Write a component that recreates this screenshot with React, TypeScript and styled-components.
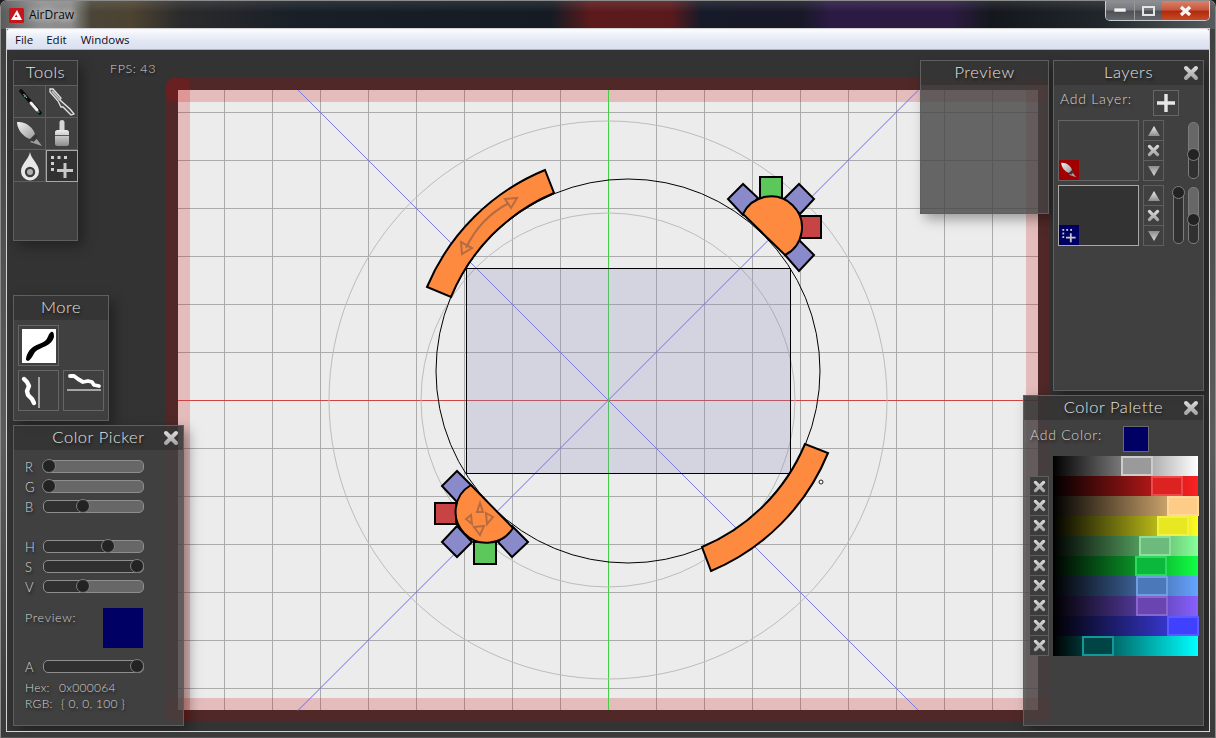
import React from "react";
import styled, { createGlobalStyle } from "styled-components";

const GlobalStyle = createGlobalStyle`
  html, body {
    margin: 0;
    padding: 0;
    background: #1c1c1c;
    overflow: hidden;
  }
  #root {
    width: 1216px;
    height: 738px;
  }
`;

const uiFont = `"Lato", "Open Sans", sans-serif`;

/* ---------- window chrome ---------- */

const Shell = styled.div`
  position: relative;
  width: 1216px;
  height: 738px;
  box-sizing: border-box;
  display: flex;
  flex-direction: column;
  padding: 0 6px 6px 6px;
  border-radius: 7px 7px 0 0;
  border: 1px solid #8c8c8c;
  border-bottom-color: #555;
  margin: 0;
  background: linear-gradient(180deg, #3d3d3d 0%, #4f4f4f 30%, #5c5c5c 60%, #3a3a3a 100%);
`;

const TitleBar = styled.div`
  height: 28px;
  margin: 0 -6px;
  padding: 0 5px 0 8px;
  display: flex;
  align-items: flex-start;
  border-radius: 6px 6px 0 0;
  background:
    linear-gradient(180deg, rgba(255, 255, 255, 0.1), rgba(255, 255, 255, 0) 40%),
    linear-gradient(
      90deg,
      #5a5a5a 0,
      #8f8f8f 40px,
      #8a8a8a 70px,
      #4a4538 90px,
      #4d4330 130px,
      #2b2b2c 180px,
      #181f28 300px,
      #151b24 550px,
      #5c1a1c 590px,
      #5a1a1c 670px,
      #171a28 700px,
      #181828 800px,
      #2c1a44 830px,
      #2d1a42 950px,
      #14181e 990px,
      #20262b 1100px,
      #585c60 1216px
    );
`;

const AppIcon = styled.svg`
  width: 15px;
  height: 15px;
  margin-top: 7px;
  flex: none;
`;

const AppTitle = styled.span`
  margin: 6px 0 0 5px;
  font: 12px/16px "Open Sans", sans-serif;
  color: #0c0c0c;
  text-shadow: 0 0 6px rgba(255, 255, 255, 0.8), 0 0 10px rgba(255, 255, 255, 0.6);
`;

const WindowControls = styled.div`
  display: flex;
  margin-left: auto;
  height: 20px;
  box-sizing: border-box;
  border: 1px solid #c9cdd0;
  border-top: none;
  border-radius: 0 0 5px 5px;
  overflow: hidden;
`;

const ControlButton = styled.div<{ $close?: boolean; $width: number }>`
  width: ${(p) => p.$width}px;
  display: flex;
  align-items: center;
  justify-content: center;
  border-left: ${(p) => (p.$close ? "none" : "1px solid #9a9a9a")};
  background: ${(p) =>
    p.$close
      ? "linear-gradient(180deg, #d8826c 0%, #c9583c 45%, #b02c10 55%, #c84a24 100%)"
      : "linear-gradient(180deg, #8c9094 0%, #74787c 45%, #4e5256 55%, #65696d 100%)"};
  &:first-child {
    border-left: none;
  }
`;

const MenuBar = styled.div`
  height: 21px;
  box-sizing: border-box;
  display: flex;
  align-items: center;
  padding: 1px 0 0 8px;
  border-radius: 2px 2px 0 0;
  border-top: 1px solid #f4f6fb;
  border-bottom: 1px solid #a9b0c6;
  background: linear-gradient(180deg, #fbfcfe 0%, #f1f3fa 20%, #e4e8f4 55%, #dae0f0 100%);
`;

const MenuItem = styled.span<{ $gap: number }>`
  margin-right: ${(p) => p.$gap}px;
  font: 11.5px/16px "Open Sans", sans-serif;
  color: #0c0c24;
`;

const Client = styled.div`
  flex: 1;
  display: flex;
  flex-direction: column;
  outline: 1px solid #d4d4d4;
`;

const Workspace = styled.div`
  position: relative;
  flex: 1;
  overflow: hidden;
  background: #333333;
`;

const CanvasSvg = styled.svg`
  display: block;
  width: 1202px;
  height: 681px;
`;

const FpsLabel = styled.span`
  position: absolute;
  left: 103px;
  top: 11px;
  font: 300 12.5px/16px ${uiFont};
  letter-spacing: 0.6px;
  color: #d4d4d4;
  text-shadow: 1px 2px 3px rgba(0, 0, 0, 0.7);
`;

/* ---------- floating panels ---------- */

const Panel = styled.section<{ $x: number; $y: number; $w: number; $h: number; $glass?: boolean }>`
  position: absolute;
  left: ${(p) => p.$x}px;
  top: ${(p) => p.$y}px;
  width: ${(p) => p.$w}px;
  height: ${(p) => p.$h}px;
  box-sizing: border-box;
  display: flex;
  flex-direction: column;
  border: 1px solid #5f5f5f;
  background: ${(p) => (p.$glass ? "rgba(68, 68, 68, 0.8)" : "#404040")};
  box-shadow: 5px 5px 12px rgba(0, 0, 0, 0.35);
  font-family: ${uiFont};
  color: #d4d4d4;
`;

const PanelHeader = styled.header`
  position: relative;
  flex: none;
  height: 24px;
  box-sizing: border-box;
  padding-bottom: 3px;
  display: flex;
  align-items: center;
  justify-content: center;
  background: rgba(40, 40, 40, 0.45);
  font-size: 16.5px;
  font-weight: 300;
  letter-spacing: 0.55px;
  color: #e2e2e2;
  text-shadow: 1px 2px 3px rgba(0, 0, 0, 0.8);
`;

const PanelClose = styled.div`
  position: absolute;
  right: 4px;
  top: 4px;
  width: 16px;
  height: 16px;
`;

const ToolGrid = styled.div`
  display: grid;
  grid-template-columns: 32px 32px;
  grid-auto-rows: 32px;
  border-top: 1px solid #5f5f5f;
`;

const ToolCell = styled.div<{ $active?: boolean }>`
  box-sizing: border-box;
  display: flex;
  align-items: center;
  justify-content: center;
  border-right: 1px solid #5f5f5f;
  border-bottom: 1px solid #5f5f5f;
  background: ${(p) => (p.$active ? "#323232" : "transparent")};
  outline: ${(p) => (p.$active ? "1px solid #a8a8a8" : "none")};
  outline-offset: -1px;
  &:nth-child(2n) {
    border-right: none;
  }
`;

const StrokeGrid = styled.div`
  display: grid;
  grid-template-columns: 41px 41px;
  grid-auto-rows: 41px;
  column-gap: 4px;
  row-gap: 4px;
  padding: 5px 0 0 4px;
`;

const StrokeButton = styled.div`
  box-sizing: border-box;
  border: 1px solid #666;
  display: flex;
  align-items: center;
  justify-content: center;
`;

const StrokeSpacer = styled.div``;

/* ---------- color picker ---------- */

const PickerBody = styled.div`
  padding: 6px 0 0 11px;
  font-size: 12px;
  text-shadow: 1px 2px 3px rgba(0, 0, 0, 0.7);
`;

const SliderGroup = styled.div`
  margin-bottom: 20px;
`;

const SliderRow = styled.div`
  display: flex;
  align-items: center;
  height: 20px;
`;

const SliderLabel = styled.span`
  width: 18px;
  padding-top: 1px;
  font-size: 13px;
  font-weight: 300;
`;

const SliderTrack = styled.div<{ $value: number }>`
  position: relative;
  width: 101px;
  height: 13px;
  box-sizing: border-box;
  border: 1px solid #8e8e8e;
  border-radius: 5px;
  background: linear-gradient(
    90deg,
    #303030 ${(p) => p.$value}%,
    #676767 ${(p) => p.$value}%
  );
`;

const SliderThumb = styled.div<{ $value: number }>`
  position: absolute;
  top: 50%;
  left: ${(p) => 5 + p.$value * 0.88}px;
  width: 14px;
  height: 14px;
  box-sizing: border-box;
  margin: -7px 0 0 -7px;
  border-radius: 50%;
  border: 1px solid #7e7e7e;
  background: #232323;
`;

const PreviewRow = styled.div`
  display: flex;
  justify-content: space-between;
  width: 118px;
  height: 40px;
  margin: -8px 0 8px;
`;

const PreviewLabel = styled.span`
  margin-top: 2px;
  font-size: 12.5px;
  font-weight: 300;
  letter-spacing: 0.7px;
`;

const Swatch = styled.div<{ $size: number; $outlined?: boolean }>`
  width: ${(p) => p.$size}px;
  height: ${(p) => p.$size}px;
  box-sizing: border-box;
  background: #000064;
  border: ${(p) => (p.$outlined ? "1px solid #6a6a6a" : "none")};
`;

const InfoLine = styled.div<{ $top?: number }>`
  display: flex;
  height: 16px;
  line-height: 16px;
  margin-top: ${(p) => p.$top ?? 0}px;
  font-size: 12px;
  font-weight: 300;
  letter-spacing: 0.3px;
  color: #d0d0d0;
`;

const InfoKey = styled.span<{ $width: number }>`
  width: ${(p) => p.$width}px;
`;

/* ---------- layers ---------- */

const LayersBody = styled.div`
  padding: 5px 0 0 4px;
`;

const AddRow = styled.div<{ $pad: number; $width: number }>`
  display: flex;
  align-items: flex-start;
  justify-content: space-between;
  box-sizing: border-box;
  width: ${(p) => p.$width}px;
  padding-left: ${(p) => p.$pad}px;
  margin-bottom: 4px;
`;

const AddLabel = styled.span`
  font-size: 14px;
  font-weight: 300;
  line-height: 18px;
  letter-spacing: 0.75px;
  color: #d4d4d4;
  text-shadow: 1px 2px 3px rgba(0, 0, 0, 0.7);
`;

const AddButton = styled.div`
  width: 26px;
  height: 26px;
  box-sizing: border-box;
  border: 1px solid #666;
  display: flex;
  align-items: center;
  justify-content: center;
`;

const LayerRow = styled.div`
  display: flex;
  height: 61px;
  margin-bottom: 4px;
`;

const LayerThumb = styled.div<{ $active?: boolean }>`
  position: relative;
  width: 81px;
  height: 61px;
  box-sizing: border-box;
  border: 1px solid ${(p) => (p.$active ? "#a8a8a8" : "#666")};
  background: ${(p) => (p.$active ? "#333333" : "transparent")};
`;

const LayerBadge = styled.div<{ $color: string }>`
  position: absolute;
  left: 0;
  bottom: 0;
  width: 20px;
  height: 20px;
  display: flex;
  align-items: center;
  justify-content: center;
  background: ${(p) => p.$color};
`;

const LayerActions = styled.div`
  display: flex;
  flex-direction: column;
  margin-left: 4px;
  width: 21px;
  border: 1px solid #5f5f5f;
  box-sizing: border-box;
  height: 61px;
`;

const LayerAction = styled.div`
  flex: 1;
  display: flex;
  align-items: center;
  justify-content: center;
  & + & {
    border-top: 1px solid #5f5f5f;
  }
`;

const VSliderSlot = styled.div<{ $left: number }>`
  width: 11px;
  margin-left: ${(p) => p.$left}px;
`;

const VSlider = styled.div<{ $value: number; $fill?: boolean }>`
  position: relative;
  width: 11px;
  height: 57px;
  margin-top: 2px;
  box-sizing: border-box;
  border: 1px solid #7c7c7c;
  border-radius: 5px;
  background: ${(p) =>
    p.$fill
      ? `linear-gradient(180deg, #676767 ${p.$value}%, #303030 ${p.$value}%)`
      : "#303030"};
`;

const VThumb = styled.div<{ $value: number }>`
  position: absolute;
  left: 50%;
  top: ${(p) => 4 + p.$value * 0.47}px;
  width: 13px;
  height: 13px;
  box-sizing: border-box;
  margin: -6.5px 0 0 -6.5px;
  border-radius: 50%;
  border: 1px solid #7e7e7e;
  background: #232323;
`;

/* ---------- palette ---------- */

const PaletteBody = styled.div`
  padding: 6px 0 0 5px;
`;

const PaletteColumns = styled.div`
  display: flex;
  margin-top: 2px;
  gap: 4px;
`;

const DeleteColumn = styled.div`
  margin-top: 20px;
  display: flex;
  flex-direction: column;
  width: 20px;
`;

const DeleteButton = styled.div`
  height: 20px;
  box-sizing: border-box;
  display: flex;
  align-items: center;
  justify-content: center;
  border: 1px solid #5f5f5f;
  background: #3c3c3c;
  & + & {
    border-top: none;
  }
`;

const RampColumn = styled.div`
  width: 145px;
  display: flex;
  flex-direction: column;
`;

const Ramp = styled.div<{ $end: string }>`
  position: relative;
  height: 20px;
  background: linear-gradient(90deg, #000 0%, ${(p) => p.$end} 100%);
`;

const RampMark = styled.div<{ $left: number; $fill: string; $edge: string }>`
  position: absolute;
  top: 0;
  bottom: 0;
  left: ${(p) => p.$left}px;
  width: 32px;
  box-sizing: border-box;
  background: ${(p) => p.$fill};
  border: 2px solid ${(p) => p.$edge};
`;

/* ---------- icons ---------- */

function IconDefs() {
  return (
    <svg width="0" height="0" style={{ position: "absolute" }}>
      <defs>
        <linearGradient id="metal" x1="0" y1="0" x2="0" y2="1">
          <stop offset="0" stopColor="#eeeeee" />
          <stop offset="1" stopColor="#8c8c8c" />
        </linearGradient>
        <linearGradient id="metalDown" x1="0" y1="0" x2="0" y2="1">
          <stop offset="0" stopColor="#8c8c8c" />
          <stop offset="1" stopColor="#d8d8d8" />
        </linearGradient>
        <linearGradient id="leaf" x1="0" y1="0" x2="1" y2="1">
          <stop offset="0" stopColor="#f2f2f2" />
          <stop offset="1" stopColor="#9a9a9a" />
        </linearGradient>
        <linearGradient id="cross" gradientUnits="userSpaceOnUse" x1="0" y1="1" x2="0" y2="15">
          <stop offset="0" stopColor="#dedede" />
          <stop offset="1" stopColor="#a0a0a0" />
        </linearGradient>
      </defs>
    </svg>
  );
}

function CrossIcon({ size }: { size: number }) {
  return (
    <svg width={size} height={size} viewBox="0 0 16 16">
      <path d="M3 3 L13 13 M13 3 L3 13" stroke="url(#cross)" strokeWidth="4" strokeLinecap="round" />
    </svg>
  );
}

function TriangleIcon({ down }: { down?: boolean }) {
  return (
    <svg width="14" height="12" viewBox="0 0 14 12">
      {down ? (
        <path d="M1 1 H13 L7 11 Z" fill="url(#metalDown)" />
      ) : (
        <path d="M7 1 L13 11 H1 Z" fill="url(#metal)" />
      )}
    </svg>
  );
}

function PenIcon() {
  return (
    <svg width="30" height="30" viewBox="0 0 30 30">
      <path d="M6 4 L25 26" stroke="#0c0c0c" strokeWidth="3.6" strokeLinecap="round" />
      <path d="M16 16 L22 23" stroke="#f0f0f0" strokeWidth="3" strokeLinecap="round" />
      <path d="M8.5 7 L12 11" stroke="#c8c8c8" strokeWidth="1" />
      <circle cx="10" cy="9" r="1.2" fill="#3aa36a" />
      <circle cx="23.5" cy="25" r="1.1" fill="#3aa36a" />
    </svg>
  );
}

function PenOutlineIcon() {
  return (
    <svg width="30" height="30" viewBox="0 0 30 30">
      <path
        d="M3 2 L6 2 L14 11 L13 13 L23 22 L27 27 L24 28 L16 20 L14 20 L11 14 L3 5 Z"
        fill="#4a4a4a"
        stroke="#e4e4e4"
        strokeWidth="1.3"
      />
      <path d="M5 4 L13 13" stroke="#bcbcbc" strokeWidth="2" />
    </svg>
  );
}

function BrushIcon({ size }: { size: number }) {
  return (
    <svg width={size} height={size} viewBox="0 0 30 30">
      <path d="M2 3 C10 2 18 8 20 15 L15 20 C8 18 2 10 2 3 Z" fill="url(#leaf)" />
      <path d="M21 19 L27 27 L15 23 Z" fill="#a0a0a0" />
      <path d="M15.5 20.5 L20.5 15.5 L23 18.5 L18.5 23 Z" fill="#383838" />
    </svg>
  );
}

function FlatBrushIcon() {
  return (
    <svg width="30" height="30" viewBox="0 0 30 30">
      <path d="M12.5 3.5 a2.5 2.5 0 0 1 5 0 V11 h-5 Z" fill="#d6d6d6" />
      <rect x="8" y="11" width="14" height="16" rx="2.5" fill="url(#metal)" />
      <rect x="8" y="16" width="14" height="1" fill="#5a5a5a" />
    </svg>
  );
}

function DropIcon() {
  return (
    <svg width="30" height="30" viewBox="0 0 30 30">
      <path d="M15 1 C16 8 24 13 24 20.5 A9 9 0 0 1 6 20.5 C6 13 14 8 15 1 Z" fill="#e8e8e8" />
      <circle cx="15" cy="21" r="5.2" fill="#3c3c3c" />
      <circle cx="15" cy="21" r="3" fill="#b0b0b0" />
    </svg>
  );
}

function MarqueeIcon({ size }: { size: number }) {
  return (
    <svg width={size} height={size} viewBox="0 0 30 30">
      <g fill="#d0d0d0">
        <rect x="4" y="5" width="3" height="3" />
        <rect x="10.5" y="5" width="3" height="3" />
        <rect x="17" y="5" width="3" height="3" />
        <rect x="4" y="11" width="3" height="3" />
        <rect x="4" y="17" width="3" height="3" />
      </g>
      <path d="M18 12 V27 M10 19.5 H26" stroke="#c8c8c8" strokeWidth="3" />
    </svg>
  );
}

function PlusIcon() {
  return (
    <svg width="22" height="22" viewBox="0 0 22 22">
      <path d="M11 2 V20 M2 11 H20" stroke="#e6e6e6" strokeWidth="3.4" />
    </svg>
  );
}

function AirLogo() {
  return (
    <AppIcon viewBox="0 0 15 15">
      <rect width="15" height="15" rx="1.5" fill="#c4161c" />
      <path d="M8 2 L13 12 H2.5 L5 9 H8.5 L7.3 6.5 L4 12 H2 Z" fill="#ffffff" />
    </AppIcon>
  );
}

/* ---------- the drawing on the canvas ---------- */

const gridColumns = [224, 272, 320, 368, 416, 464, 512, 560, 656, 704, 752, 800, 848, 896, 944, 992];
const gridRows = [112, 160, 208, 256, 304, 352, 448, 496, 544, 592, 640, 688];

const ORANGE = "#fe8a40";
const GREEN = "#5cc85c";
const RED = "#c84444";
const PERIWINKLE = "#8a8acb";
const ARROW = "#b56c40";

function Diamonds({ points }: { points: string[] }) {
  return (
    <>
      {points.map((p) => (
        <polygon key={p} points={p} fill={PERIWINKLE} stroke="#000" strokeWidth="2" />
      ))}
    </>
  );
}

function CanvasDrawing() {
  return (
    <CanvasSvg viewBox="7 50 1202 681">
      <rect x="178" y="90" width="860" height="620" fill="#ececec" />
      {gridColumns.map((x) => (
        <line key={x} x1={x + 0.5} y1="90" x2={x + 0.5} y2="710" stroke="#ababab" />
      ))}
      {gridRows.map((y) => (
        <line key={y} x1="178" y1={y + 0.5} x2="1038" y2={y + 0.5} stroke="#ababab" />
      ))}

      <g fill="rgba(200,0,0,0.2)">
        <rect x="166" y="78" width="884" height="24" rx="8" />
        <rect x="166" y="698" width="884" height="24" rx="8" />
        <rect x="166" y="78" width="24" height="644" rx="8" />
        <rect x="1026" y="78" width="24" height="644" rx="8" />
      </g>

      <g fill="none" strokeWidth="1">
        <line x1="298" y1="90" x2="918" y2="710" stroke="#7a7ae0" />
        <line x1="298" y1="710.5" x2="918" y2="90.5" stroke="#6a6af0" />
        <line x1="178" y1="400.5" x2="1038" y2="400.5" stroke="#d04444" />
        <line x1="608.5" y1="90" x2="608.5" y2="710" stroke="#44d044" />
        <circle cx="608" cy="400" r="279" stroke="#bcbcbc" />
        <circle cx="608" cy="400" r="187" stroke="#bcbcbc" />
      </g>

      <rect x="466.5" y="268.5" width="324" height="205" fill="rgba(140,140,190,0.25)" stroke="#000" />
      <circle cx="628" cy="371" r="192" fill="none" stroke="#000" />

      <g fill={ORANGE} stroke="#000" strokeWidth="2" strokeLinejoin="miter">
        <path d="M545 170 A217.5 217.5 0 0 0 427 287 L451 297 A192 192 0 0 1 554 193 Z" />
        <path d="M805 444 A192 192 0 0 1 702 547 L711 571 A217.5 217.5 0 0 0 828 453 Z" />
      </g>
      <g fill="none" stroke={ARROW} strokeWidth="2">
        <path d="M466 248 Q480 218 509 203" />
        <polygon points="505,199 517,198 511,208" />
        <polygon points="461,242 472,248 462,254" />
      </g>

      <rect x="760" y="177" width="22" height="22" fill={GREEN} stroke="#000" strokeWidth="2" />
      <rect x="800" y="216" width="21" height="22" fill={RED} stroke="#000" strokeWidth="2" />
      <Diamonds
        points={[
          "743,184 728,199 743,215 758,198",
          "799,184 814,199 800,214 784,199",
          "799,240 814,255 799,271 785,255",
        ]}
      />
      <path d="M743 214 L785 255 A31 31 0 1 0 743 214 Z" fill={ORANGE} stroke="#000" strokeWidth="2" />

      <rect x="435" y="503" width="21" height="21" fill={RED} stroke="#000" strokeWidth="2" />
      <rect x="474" y="542" width="22" height="22" fill={GREEN} stroke="#000" strokeWidth="2" />
      <Diamonds
        points={[
          "457,471 442,486 457,502 472,486",
          "457,526 442,542 457,557 472,542",
          "512,526 528,542 512,557 498,542",
        ]}
      />
      <path d="M471 485 A31 31 0 1 0 513 528 Z" fill={ORANGE} stroke="#000" strokeWidth="2" />
      <g fill="none" stroke={ARROW} strokeWidth="2">
        <polygon points="480,503 477,512 483,512" />
        <polygon points="471,515 466,519 472,524" />
        <polygon points="486,513 493,517 487,524" />
        <polygon points="474,527 484,526 480,535" />
      </g>

      <circle cx="821" cy="482" r="2" fill="#fff" stroke="#222" strokeWidth="1" />
    </CanvasSvg>
  );
}

/* ---------- data ---------- */

const rgbSliders = [
  { label: "R", value: 0 },
  { label: "G", value: 0 },
  { label: "B", value: 39 },
];

const hsvSliders = [
  { label: "H", value: 67 },
  { label: "S", value: 100 },
  { label: "V", value: 39 },
];

const ramps = [
  { end: "#ffffff", left: 68, fill: "#9a9a9a", edge: "#cccccc" },
  { end: "#ff2222", left: 98, fill: "#dd2222", edge: "#f04848" },
  { end: "#ffcc88", left: 114, fill: "#ffcc88", edge: "#ffd89c" },
  { end: "#ffff22", left: 104, fill: "#e8e822", edge: "#f4f048" },
  { end: "#88ff99", left: 86, fill: "#6cbb7c", edge: "#88e09a" },
  { end: "#11ff44", left: 82, fill: "#0cb83c", edge: "#30d860" },
  { end: "#66a4ff", left: 83, fill: "#4a78b8", edge: "#6ea0e0" },
  { end: "#8860ff", left: 83, fill: "#6a44b0", edge: "#8a66cc" },
  { end: "#4444ff", left: 114, fill: "#4040ff", edge: "#5a5aff" },
  { end: "#00ffff", left: 29, fill: "#004444", edge: "#119999" },
];

function HSlider({ label, value }: { label: string; value: number }) {
  return (
    <SliderRow>
      <SliderLabel>{label}</SliderLabel>
      <SliderTrack $value={value}>
        <SliderThumb $value={value} />
      </SliderTrack>
    </SliderRow>
  );
}

function LayerButtons() {
  return (
    <LayerActions>
      <LayerAction>
        <TriangleIcon />
      </LayerAction>
      <LayerAction>
        <CrossIcon size={13} />
      </LayerAction>
      <LayerAction>
        <TriangleIcon down />
      </LayerAction>
    </LayerActions>
  );
}

export default function App() {
  return (
    <>
      <GlobalStyle />
      <IconDefs />
      <Shell>
        <TitleBar>
          <AirLogo />
          <AppTitle>AirDraw</AppTitle>
          <WindowControls>
            <ControlButton $width={28}>
              <svg width="12" height="5" viewBox="0 0 12 5">
                <rect width="12" height="4" fill="#f2f2f2" stroke="#444" strokeWidth="0.5" />
              </svg>
            </ControlButton>
            <ControlButton $width={27}>
              <svg width="13" height="10" viewBox="0 0 13 10">
                <rect x="1" y="1" width="11" height="8" fill="none" stroke="#e4e4e4" strokeWidth="2" />
              </svg>
            </ControlButton>
            <ControlButton $width={47} $close>
              <svg width="15" height="12" viewBox="0 0 15 12">
                <path d="M3 2 L12 10 M12 2 L3 10" stroke="#f4f4f4" strokeWidth="3.4" />
              </svg>
            </ControlButton>
          </WindowControls>
        </TitleBar>

        <Client>
          <MenuBar>
            <MenuItem $gap={13}>File</MenuItem>
            <MenuItem $gap={14}>Edit</MenuItem>
            <MenuItem $gap={0}>Windows</MenuItem>
          </MenuBar>

          <Workspace>
            <CanvasDrawing />
            <FpsLabel>FPS: 43</FpsLabel>

            <Panel $x={6} $y={10} $w={65} $h={181}>
              <PanelHeader>Tools</PanelHeader>
              <ToolGrid>
                <ToolCell>
                  <PenIcon />
                </ToolCell>
                <ToolCell>
                  <PenOutlineIcon />
                </ToolCell>
                <ToolCell>
                  <BrushIcon size={30} />
                </ToolCell>
                <ToolCell>
                  <FlatBrushIcon />
                </ToolCell>
                <ToolCell>
                  <DropIcon />
                </ToolCell>
                <ToolCell $active>
                  <MarqueeIcon size={30} />
                </ToolCell>
              </ToolGrid>
            </Panel>

            <Panel $x={6} $y={245} $w={96} $h={126}>
              <PanelHeader>More</PanelHeader>
              <StrokeGrid>
                <StrokeButton>
                  <svg width="34" height="34" viewBox="0 0 34 34">
                    <rect width="34" height="34" fill="#fff" />
                    <path
                      d="M4 31 C4 26 7 21 11 18 C15 15 19 15 23 12 C26 10 26 5 29 3 C32 2 32 6 32 8 C31 12 28 15 24 17 C20 19 16 20 13 23 C11 26 9 31 6 32 Z"
                      fill="#000"
                    />
                  </svg>
                </StrokeButton>
                <StrokeSpacer />
                <StrokeButton>
                  <svg width="39" height="39" viewBox="0 0 39 39">
                    <path
                      d="M5 8 L8 11 L10 15 L8 20 L9 24 L13 28 L15 32"
                      fill="none"
                      stroke="#fff"
                      strokeWidth="4.4"
                      strokeLinecap="round"
                      strokeLinejoin="round"
                    />
                    <line x1="20" y1="6" x2="20" y2="37" stroke="#c8c8c8" strokeWidth="1.5" />
                  </svg>
                </StrokeButton>
                <StrokeButton>
                  <svg width="39" height="39" viewBox="0 0 39 39">
                    <path
                      d="M6 5 L10 5 L14 8 L19 11 L24 10 L28 11 L30 14 L35 15"
                      fill="none"
                      stroke="#fff"
                      strokeWidth="3.8"
                      strokeLinecap="round"
                      strokeLinejoin="round"
                    />
                    <line x1="3" y1="19" x2="37" y2="19" stroke="#c8c8c8" strokeWidth="1.5" />
                  </svg>
                </StrokeButton>
              </StrokeGrid>
            </Panel>

            <Panel $x={6} $y={375} $w={171} $h={301} $glass>
              <PanelHeader>
                Color Picker
                <PanelClose>
                  <CrossIcon size={16} />
                </PanelClose>
              </PanelHeader>
              <PickerBody>
                <SliderGroup>
                  {rgbSliders.map((s) => (
                    <HSlider key={s.label} label={s.label} value={s.value} />
                  ))}
                </SliderGroup>
                <SliderGroup>
                  {hsvSliders.map((s) => (
                    <HSlider key={s.label} label={s.label} value={s.value} />
                  ))}
                </SliderGroup>
                <PreviewRow>
                  <PreviewLabel>Preview:</PreviewLabel>
                  <Swatch $size={40} />
                </PreviewRow>
                <HSlider label="A" value={100} />
                <InfoLine $top={4}>
                  <InfoKey $width={34}>Hex:</InfoKey>
                  0x000064
                </InfoLine>
                <InfoLine>
                  <InfoKey $width={36}>RGB:</InfoKey>
                  {"{ 0, 0, 100 }"}
                </InfoLine>
              </PickerBody>
            </Panel>

            <Panel $x={913} $y={10} $w={129} $h={154} $glass>
              <PanelHeader>Preview</PanelHeader>
            </Panel>

            <Panel $x={1046} $y={10} $w={151} $h={331}>
              <PanelHeader>
                Layers
                <PanelClose>
                  <CrossIcon size={16} />
                </PanelClose>
              </PanelHeader>
              <LayersBody>
                <AddRow $pad={2} $width={121}>
                  <AddLabel>Add Layer:</AddLabel>
                  <AddButton>
                    <PlusIcon />
                  </AddButton>
                </AddRow>
                <LayerRow>
                  <LayerThumb>
                    <LayerBadge $color="#a00000">
                      <BrushIcon size={18} />
                    </LayerBadge>
                  </LayerThumb>
                  <LayerButtons />
                  <VSliderSlot $left={9} />
                  <VSliderSlot $left={4}>
                    <VSlider $value={55} $fill>
                      <VThumb $value={58} />
                    </VSlider>
                  </VSliderSlot>
                </LayerRow>
                <LayerRow>
                  <LayerThumb $active>
                    <LayerBadge $color="#000064">
                      <MarqueeIcon size={18} />
                    </LayerBadge>
                  </LayerThumb>
                  <LayerButtons />
                  <VSliderSlot $left={9}>
                    <VSlider $value={0}>
                      <VThumb $value={0} />
                    </VSlider>
                  </VSliderSlot>
                  <VSliderSlot $left={4}>
                    <VSlider $value={55} $fill>
                      <VThumb $value={58} />
                    </VSlider>
                  </VSliderSlot>
                </LayerRow>
              </LayersBody>
            </Panel>

            <Panel $x={1016} $y={345} $w={181} $h={331} $glass>
              <PanelHeader>
                Color Palette
                <PanelClose>
                  <CrossIcon size={16} />
                </PanelClose>
              </PanelHeader>
              <PaletteBody>
                <AddRow $pad={1} $width={120}>
                  <AddLabel>Add Color:</AddLabel>
                  <Swatch $size={26} $outlined />
                </AddRow>
                <PaletteColumns>
                  <DeleteColumn>
                    {ramps.slice(1).map((r) => (
                      <DeleteButton key={r.end}>
                        <CrossIcon size={13} />
                      </DeleteButton>
                    ))}
                  </DeleteColumn>
                  <RampColumn>
                    {ramps.map((r) => (
                      <Ramp key={r.end} $end={r.end}>
                        <RampMark $left={r.left} $fill={r.fill} $edge={r.edge} />
                      </Ramp>
                    ))}
                  </RampColumn>
                </PaletteColumns>
              </PaletteBody>
            </Panel>
          </Workspace>
        </Client>
      </Shell>
    </>
  );
}
